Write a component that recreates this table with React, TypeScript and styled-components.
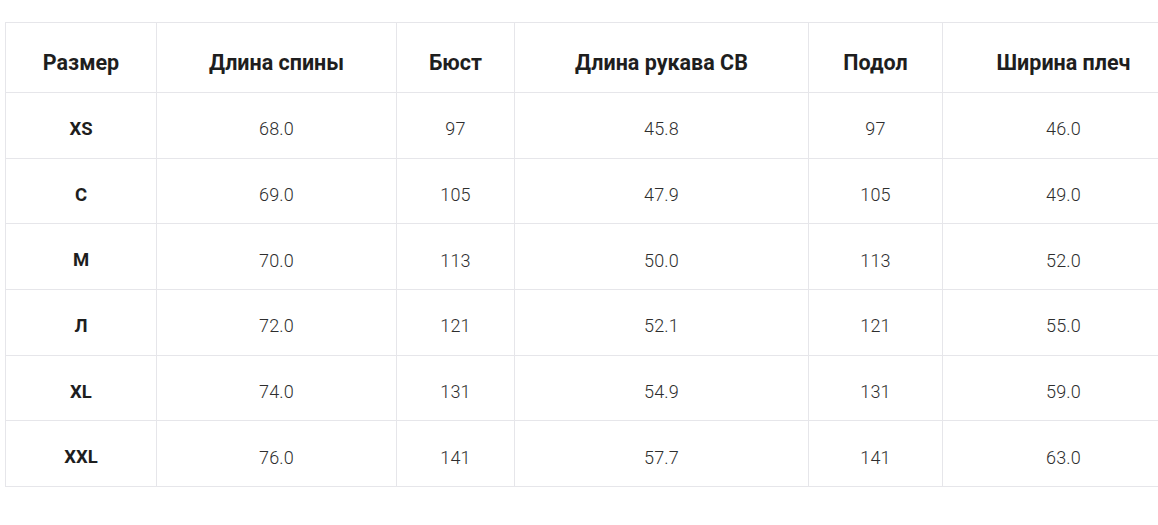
import styled, { createGlobalStyle } from 'styled-components';

const GlobalStyle = createGlobalStyle`
  html, body {
    margin: 0;
    padding: 0;
    background: #fff;
    overflow: hidden;
  }
  body {
    font-family: Roboto, "Noto Sans", sans-serif;
  }
`

const Page = styled.div`
  padding: 22px 0 0 5px;
  width: 1158px;
  box-sizing: border-box;
  overflow: hidden;
`

const SizeTable = styled.table<{ $w: number }>`
  border-collapse: collapse;
  table-layout: fixed;
  width: ${p => p.$w}px;
  color: #222;
`

const HeadCell = styled.th<{ $w: number }>`
  width: ${p => p.$w}px;
  height: 70px;
  border: 1px solid #e6e6ea;
  font-size: 21.5px;
  font-weight: 700;
  color: #1e1e1e;
  text-align: center;
  vertical-align: middle;
  padding: 9px 0 0;
  box-sizing: border-box;
`

const Cell = styled.td<{ $bold?: boolean }>`
  height: 65.7px;
  border: 1px solid #e6e6ea;
  text-align: center;
  vertical-align: middle;
  padding: 7px 0 0;
  box-sizing: border-box;
  font-size: ${p => (p.$bold ? '18.5px' : '18px')};
  font-weight: ${p => (p.$bold ? 700 : 300)};
  color: ${p => (p.$bold ? '#1e1e1e' : '#2e2e2e')};
  letter-spacing: ${p => (p.$bold ? '0' : '0.2px')};
`

const columns = [
  { title: 'Размер', w: 151 },
  { title: 'Длина спины', w: 240 },
  { title: 'Бюст', w: 118 },
  { title: 'Длина рукава CB', w: 294 },
  { title: 'Подол', w: 134 },
  { title: 'Ширина плеч', w: 242 },
]

const rows = [
  ['XS', '68.0', '97', '45.8', '97', '46.0'],
  ['C', '69.0', '105', '47.9', '105', '49.0'],
  ['M', '70.0', '113', '50.0', '113', '52.0'],
  ['Л', '72.0', '121', '52.1', '121', '55.0'],
  ['XL', '74.0', '131', '54.9', '131', '59.0'],
  ['XXL', '76.0', '141', '57.7', '141', '63.0'],
]

export default function App() {
  const total = columns.reduce((s, c) => s + c.w, 0);
  return (
    <>
      <GlobalStyle />
      <Page>
        <SizeTable $w={total}>
          <thead>
            <tr>
              {columns.map(c => (
                <HeadCell key={c.title} $w={c.w}>{c.title}</HeadCell>
              ))}
            </tr>
          </thead>
          <tbody>
            {rows.map(r => (
              <tr key={r[0]}>
                {r.map((v, i) => (
                  <Cell key={i} $bold={i === 0}>{v}</Cell>
                ))}
              </tr>
            ))}
          </tbody>
        </SizeTable>
      </Page>
    </>
  );
}
